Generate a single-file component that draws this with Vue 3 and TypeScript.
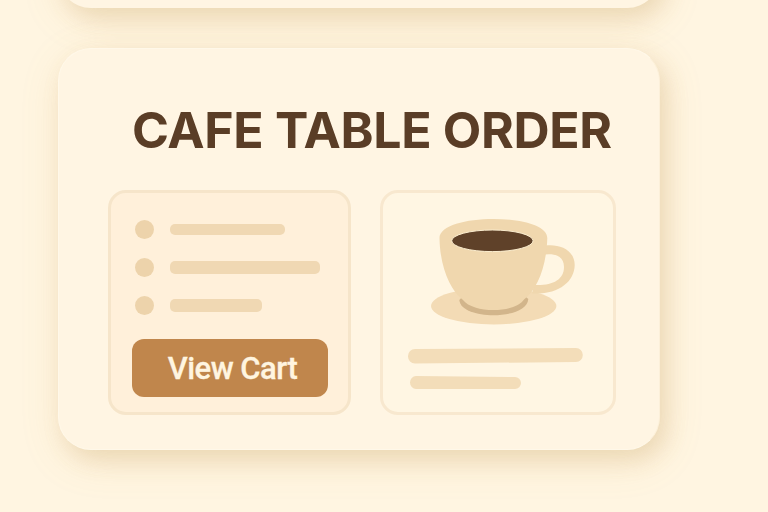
<script setup lang="ts">
interface OrderLine {
  id: number
  width: number
  height: number
}

const lines: OrderLine[] = [
  { id: 1, width: 115, height: 11 },
  { id: 2, width: 150, height: 13 },
  { id: 3, width: 92, height: 13 },
]
</script>

<template>
  <main class="page">
    <section class="card card-previous"></section>
    <section class="card card-order">
      <h1 class="title">CAFE TABLE ORDER</h1>
      <div class="panels">
        <div class="panel panel-list">
          <ul class="lines">
            <li v-for="line in lines" :key="line.id" class="line">
              <span class="dot"></span>
              <span class="bar" :style="{ width: line.width + 'px', height: line.height + 'px' }"></span>
            </li>
          </ul>
          <button class="cart" type="button">View Cart</button>
        </div>
        <div class="panel panel-item">
          <svg class="cup" width="148" height="110" viewBox="428 217 148 110" aria-hidden="true">
            <ellipse cx="493.7" cy="306" rx="62.700" ry="18.500" fill="#f3dbb5" />
            <path d="M541 246.500C554 242.500 574.500 247 574.700 265C574.500 282 558 295 532 293.500L534 285C552 286 564 280 564 267C564 254 552 253 541 255Z" fill="#f0d7ae" />
            <path d="M459.300 300C461 320.500 527 320.500 528.300 299L520 292L467 292Z" fill="#d2b58b" />
            <path d="M439.500 238C439.500 212.500 547.300 212.500 547.300 238C546.500 267 537 290 524 299.500C515 313.500 473 313.500 463 300C450 290 440 267 439.500 238Z" fill="#f0d7ae" />
            <ellipse cx="492.400" cy="240.800" rx="40.700" ry="10.800" fill="#5f4129" stroke="#fbedcf" stroke-width="1" />
          </svg>
          <svg class="text-bars" width="176" height="44" viewBox="407 347 176 44" aria-hidden="true">
            <path d="M415 349L576 348A6.800 7 0 0 1 576 362L415 363.500A7 7.200 0 0 1 415 349Z" fill="#f3ddb9" />
            <path d="M416 376L515 377A6 6 0 0 1 515 389L416 389A6 6.500 0 0 1 416 376Z" fill="#f3ddb9" />
          </svg>
        </div>
      </div>
    </section>
  </main>
</template>

<style>
body {
  background: #fff5e1;
}
</style>

<style scoped>
.page {
  box-sizing: border-box;
  width: 768px;
  height: 512px;
  padding-left: 58px;
  overflow: hidden;
  background: #fff5e1;
}
.card {
  box-sizing: border-box;
  width: 602px;
  border-radius: 33px;
  background: #fff5e3;
  box-shadow: 7px 10px 22px rgba(180, 137, 67, 0.19), 3px 10px 40px rgba(215, 170, 90, 0.17);
}
.card-previous {
  height: 70px;
  margin-top: -62px;
}
.card-order {
  height: 402px;
  margin-top: 40px;
  padding: 51px 43px 0 49px;
  border: 1px solid #fff8e9;
  border-right-color: #fcf0da;
}
.title {
  margin: 0 0 0 24px;
  height: 60px;
  line-height: 60px;
  font-family: Inter, "Liberation Sans", sans-serif;
  font-size: 50px;
  font-weight: 700;
  letter-spacing: -0.32px;
  white-space: nowrap;
  color: #5a3d26;
}
.panels {
  display: flex;
  gap: 29px;
  margin-top: 30px;
}
.panel {
  box-sizing: border-box;
  height: 225px;
  border: 3px solid #f6e5ca;
  border-radius: 18px;
}
.panel-list {
  width: 243px;
  padding: 27px 20px 0 21px;
  background: #fff0da;
}
.panel-item {
  display: flex;
  flex-direction: column;
  width: 236px;
  padding: 24px 0 0 24px;
  background: #fff6e3;
  border-color: #f8e8cf;
}
.lines {
  display: flex;
  flex-direction: column;
  gap: 19px;
  margin: 0;
  padding: 0 0 0 3px;
  list-style: none;
}
.line {
  display: flex;
  align-items: center;
  gap: 16px;
  height: 19px;
}
.dot {
  width: 19px;
  height: 19px;
  border-radius: 50%;
  background: #edd3ab;
}
.bar {
  margin-top: -1px;
  border-radius: 5px;
  background: #f0d8b3;
}
.cart {
  display: block;
  width: 196px;
  height: 58px;
  margin-top: 24px;
  padding: 1px 0 0 5px;
  border: 0;
  border-radius: 12px;
  background: #c0864c;
  font-family: Roboto, "Liberation Sans", sans-serif;
  font-size: 31px;
  font-weight: 500;
  letter-spacing: -0.5px;
  line-height: 57px;
  text-align: center;
  white-space: nowrap;
  color: #fff5e0;
  -webkit-text-stroke: 0.3px #fff5e0;
}
.cup {
  display: block;
  margin-left: 21px;
}
.text-bars {
  display: block;
  margin-top: 20px;
}
</style>
